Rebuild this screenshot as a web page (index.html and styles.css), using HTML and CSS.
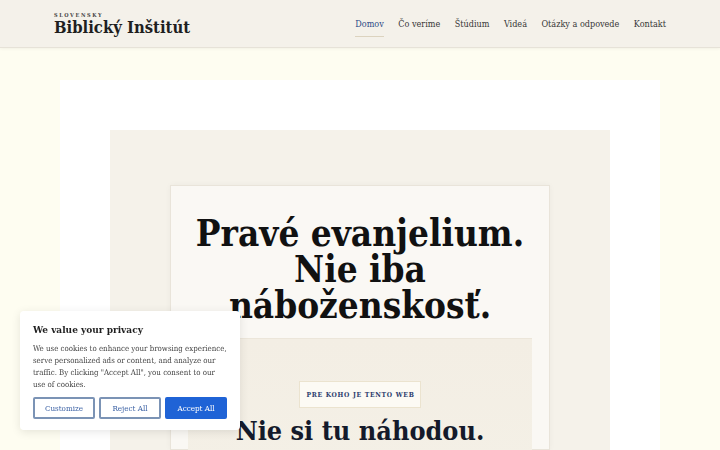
FILE: index.html
```html
<!DOCTYPE html>
<html lang="sk">
<head>
<meta charset="utf-8">
<title>Slovenský Biblický Inštitút</title>
<link rel="stylesheet" href="styles.css">
</head>
<body>
<header class="site-header">
  <div class="header-inner">
    <a class="brand" href="#">
      <span class="brand-kicker">SLOVENSKY</span>
      <span class="brand-name">Biblický Inštitút</span>
    </a>
    <nav class="nav">
      <a class="nav-link active" href="#">Domov</a>
      <a class="nav-link" href="#">Čo veríme</a>
      <a class="nav-link" href="#">Štúdium</a>
      <a class="nav-link" href="#">Videá</a>
      <a class="nav-link" href="#">Otázky a odpovede</a>
      <a class="nav-link" href="#">Kontakt</a>
    </nav>
  </div>
</header>
<main class="page">
  <section class="sheet">
    <div class="hero">
      <div class="hero-card">
        <h1 class="hero-title">Pravé evanjelium. Nie iba náboženskosť.</h1>
        <div class="intro">
          <span class="badge">PRE KOHO JE TENTO WEB</span>
          <h2 class="intro-title">Nie si tu náhodou.</h2>
        </div>
      </div>
    </div>
  </section>
</main>
<div class="cookie">
  <h3 class="cookie-title">We value your privacy</h3>
  <p class="cookie-text">We use cookies to enhance your browsing experience, serve personalized ads or content, and analyze our traffic. By clicking "Accept All", you consent to our use of cookies.</p>
  <div class="cookie-actions">
    <button class="btn btn-outline">Customize</button>
    <button class="btn btn-outline">Reject All</button>
    <button class="btn btn-primary">Accept All</button>
  </div>
</div>
</body>
</html>
```
FILE: styles.css
```css
* { box-sizing: border-box; }
html, body { margin: 0; padding: 0; }
body {
  background: #fefdf1;
  font-family: "DejaVu Serif Condensed", "DejaVu Serif", serif;
  font-stretch: condensed;
  color: #1c1c1c;
  height: 450px;
  overflow: hidden;
}
a { text-decoration: none; color: inherit; }

.site-header {
  height: 48px;
  background: #f4f1ea;
  border-bottom: 1px solid #e6e2d8;
  box-shadow: 0 1px 3px rgba(0,0,0,0.05);
}
.header-inner {
  max-width: 612px;
  margin: 0 auto;
  height: 100%;
  display: flex;
  align-items: center;
  justify-content: space-between;
  padding-top: 2px;
}
.brand { display: flex; flex-direction: column; color: #1f1f1f; }
.brand-kicker {
  font-size: 5.5px;
  font-weight: bold;
  letter-spacing: 1.6px;
  color: #444;
  line-height: 6px;
}
.brand-name {
  font-size: 16.5px;
  font-weight: bold;
  line-height: 19px;
}
.nav { display: flex; gap: 14.5px; margin-top: 2px; }
.nav-link {
  font-size: 9px;
  color: #363636;
  padding: 4px 0 7px;
  border-bottom: 1px solid transparent;
}
.nav-link.active { color: #2c4a86; border-bottom-color: #dcd3bf; }

.page { padding-top: 32px; }
.sheet {
  width: 600px;
  margin: 0 auto;
  background: #ffffff;
  padding: 50px 50px 0;
  height: 370px;
}
.hero {
  background: #f5f2ea;
  padding: 55px 60px 0;
  height: 320px;
}
.hero-card {
  background: #faf8f4;
  border: 1px solid #e9e4da;
  box-shadow: 0 0 6px rgba(0,0,0,0.04);
  padding: 30px 17px 0;
  height: 265px;
}
.hero-title {
  margin: 0;
  text-align: center;
  font-size: 36.6px;
  line-height: 36px;
  font-weight: bold;
  color: #111;
}
.intro {
  margin-top: 14px;
  background: linear-gradient(#f3eee4, #f4f0e6);
  border-top: 1px solid #ece6da;
  padding-top: 42px;
  display: flex;
  flex-direction: column;
  align-items: center;
  height: 130px;
}
.badge {
  display: inline-block;
  border: 1px solid #ebe3cf;
  background: #fcfaf4;
  color: #2d3e6e;
  font-size: 6.8px;
  font-weight: bold;
  letter-spacing: 0.7px;
  padding: 9px 5px 8px 6px;
  line-height: 8px;
}
.intro-title {
  margin: 7px 0 0;
  font-size: 26.8px;
  line-height: 32px;
  font-weight: bold;
  color: #141a2b;
}

.cookie {
  position: fixed;
  left: 20px;
  bottom: 20px;
  width: 220px;
  background: #ffffff;
  border-radius: 4px;
  box-shadow: 0 2px 10px rgba(0,0,0,0.10);
  padding: 12px 13px 11px;
}
.cookie-title {
  margin: 0 0 6px;
  font-size: 10px;
  font-weight: bold;
  line-height: 14px;
  color: #1f1f1f;
}
.cookie-text {
  margin: 0 0 6px;
  font-size: 7.85px;
  line-height: 12px;
  color: #444;
}
.cookie-actions { display: flex; gap: 4px; }
.btn {
  font-family: "DejaVu Serif Condensed", "DejaVu Serif", serif;
  font-stretch: condensed;
  font-size: 8px;
  height: 22px;
  border-radius: 2px;
  padding: 0;
  flex: 1;
  cursor: pointer;
}
.btn-outline {
  background: #fff;
  border: 2px solid #7b93b5;
  color: #3f64a6;
}
.btn-primary {
  background: #1f63d6;
  border: 2px solid #1f63d6;
  color: #fff;
}
```
